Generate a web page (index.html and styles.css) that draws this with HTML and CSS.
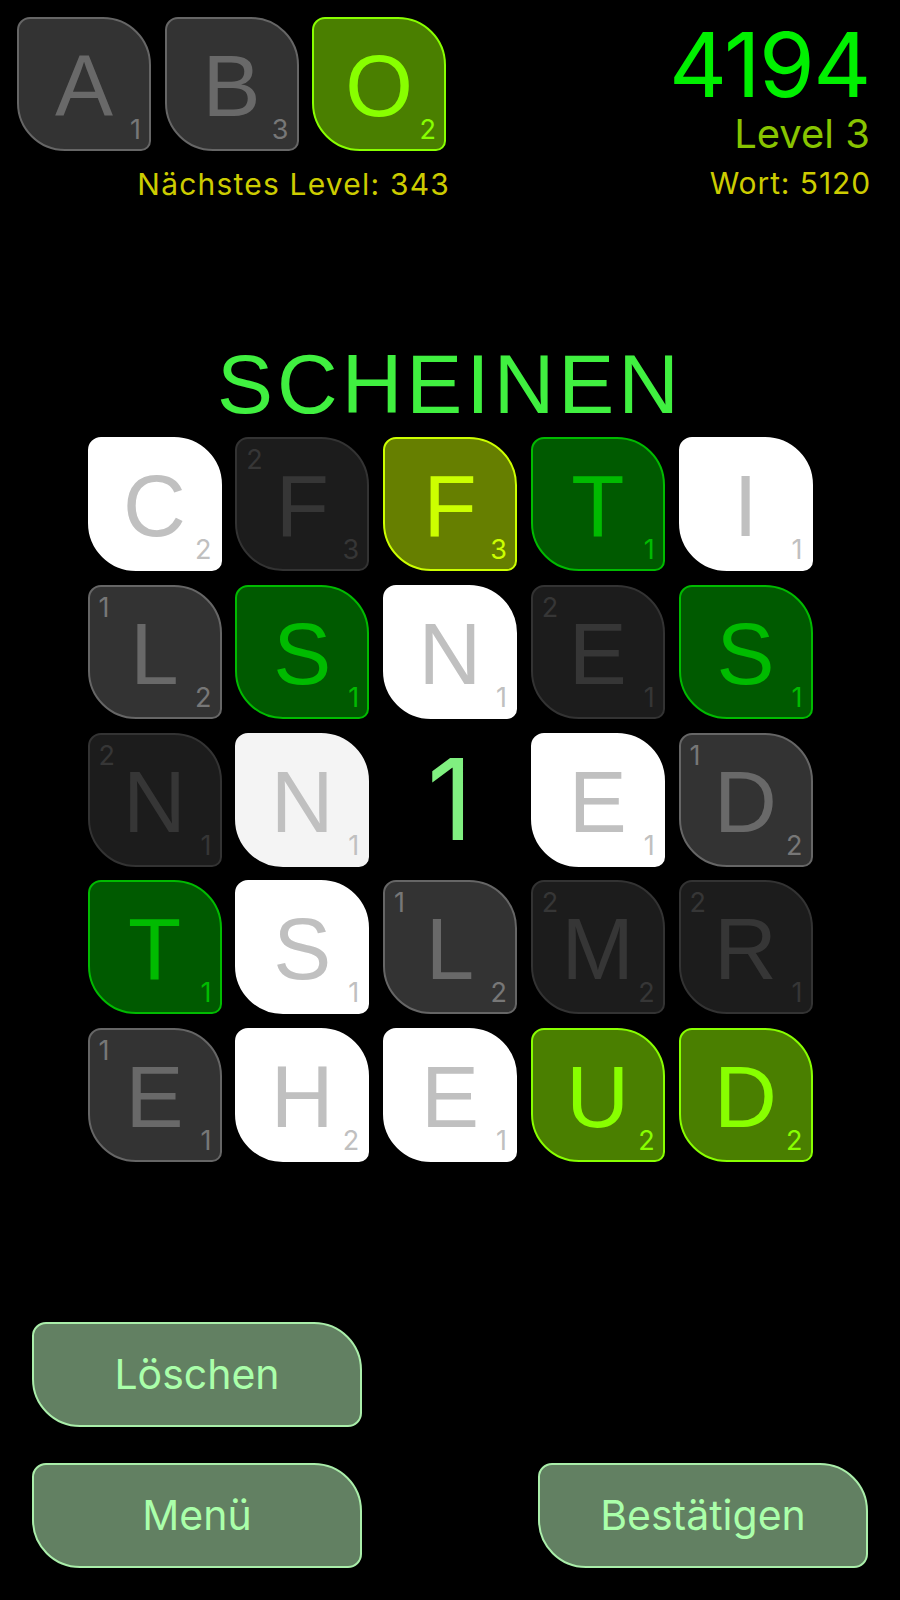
FILE: index.html
```html
<!DOCTYPE html>
<html lang="de">
<head>
<meta charset="utf-8">
<title>Wortspiel</title>
<link rel="stylesheet" href="styles.css">
</head>
<body>
<div class="screen">
  <header class="top">
    <div class="picked">
      <div class="picked-tiles">
        <div class="tile t-gray"><span class="ch">A</span><span class="pts">1</span></div>
        <div class="tile t-gray"><span class="ch">B</span><span class="pts">3</span></div>
        <div class="tile t-lime"><span class="ch">O</span><span class="pts">2</span></div>
      </div>
      <div class="next">Nächstes Level: 343</div>
    </div>
    <div class="score">
      <div class="total">4194</div>
      <div class="level">Level 3</div>
      <div class="word">Wort: 5120</div>
    </div>
  </header>

  <h1 class="current">SCHEINEN</h1>

  <div class="board">
    <div class="tile t-white"><span class="ch">C</span><span class="pts">2</span></div>
    <div class="tile t-dark"><span class="mul">2</span><span class="ch">F</span><span class="pts">3</span></div>
    <div class="tile t-olive"><span class="ch">F</span><span class="pts">3</span></div>
    <div class="tile t-green"><span class="ch">T</span><span class="pts">1</span></div>
    <div class="tile t-white"><span class="ch">I</span><span class="pts">1</span></div>

    <div class="tile t-gray"><span class="mul">1</span><span class="ch">L</span><span class="pts">2</span></div>
    <div class="tile t-green"><span class="ch">S</span><span class="pts">1</span></div>
    <div class="tile t-white"><span class="ch">N</span><span class="pts">1</span></div>
    <div class="tile t-dark"><span class="mul">2</span><span class="ch">E</span><span class="pts">1</span></div>
    <div class="tile t-green"><span class="ch">S</span><span class="pts">1</span></div>

    <div class="tile t-dark"><span class="mul">2</span><span class="ch">N</span><span class="pts">1</span></div>
    <div class="tile t-soft"><span class="ch">N</span><span class="pts">1</span></div>
    <div class="gap-cell">1</div>
    <div class="tile t-white"><span class="ch">E</span><span class="pts">1</span></div>
    <div class="tile t-gray"><span class="mul">1</span><span class="ch">D</span><span class="pts">2</span></div>

    <div class="tile t-green"><span class="ch">T</span><span class="pts">1</span></div>
    <div class="tile t-white"><span class="ch">S</span><span class="pts">1</span></div>
    <div class="tile t-gray"><span class="mul">1</span><span class="ch">L</span><span class="pts">2</span></div>
    <div class="tile t-dark"><span class="mul">2</span><span class="ch">M</span><span class="pts">2</span></div>
    <div class="tile t-dark"><span class="mul">2</span><span class="ch">R</span><span class="pts">1</span></div>

    <div class="tile t-gray"><span class="mul">1</span><span class="ch">E</span><span class="pts">1</span></div>
    <div class="tile t-white"><span class="ch">H</span><span class="pts">2</span></div>
    <div class="tile t-white"><span class="ch">E</span><span class="pts">1</span></div>
    <div class="tile t-lime"><span class="ch">U</span><span class="pts">2</span></div>
    <div class="tile t-lime"><span class="ch">D</span><span class="pts">2</span></div>
  </div>

  <footer class="actions">
    <button class="btn btn-clear">Löschen</button>
    <button class="btn btn-menu">Menü</button>
    <button class="btn btn-ok">Bestätigen</button>
  </footer>
</div>
</body>
</html>
```

FILE: styles.css
```css
html, body {
  margin: 0;
  padding: 0;
  background: #000;
}

.screen {
  width: 900px;
  min-height: 1600px;
  background: #000;
  font-family: Inter, "Noto Sans", sans-serif;
}

/* ---------- header ---------- */
.top {
  display: flex;
  justify-content: space-between;
  align-items: flex-start;
  padding: 17px 30px 0 17px;
}

.picked {
  display: flex;
  flex-direction: column;
  align-items: flex-end;
}

.picked-tiles {
  display: flex;
  gap: 13.5px;
}

.next {
  margin-top: 18px;
  margin-right: -4px;
  font-size: 30px;
  line-height: 1;
  letter-spacing: 1.2px;
  color: #cccc00;
}

.score {
  display: flex;
  flex-direction: column;
  align-items: flex-end;
}

.total {
  margin-top: 3px;
  font-size: 90px;
  line-height: 1;
  letter-spacing: -1.5px;
  color: #00f000;
}

.level {
  margin-top: 4px;
  font-size: 40px;
  line-height: 1;
  color: #88c400;
}

.word {
  margin-top: 14px;
  margin-right: -1px;
  font-size: 30px;
  line-height: 1;
  letter-spacing: 0.9px;
  color: #cccc00;
}

/* ---------- current word ---------- */
.current {
  margin: 143px 0 11px;
  text-align: center;
  font-family: "Liberation Sans", Arial, sans-serif;
  font-weight: 400;
  font-size: 84px;
  line-height: 1;
  letter-spacing: 4px;
  color: #40f040;
}

/* ---------- board ---------- */
.board {
  display: grid;
  grid-template-columns: repeat(5, 134px);
  grid-auto-rows: 134px;
  gap: 13.75px;
  justify-content: center;
}

.tile {
  position: relative;
  box-sizing: border-box;
  width: 134px;
  height: 134px;
  border: 2px solid;
  border-radius: 13px 48px 10px 48px;
  display: flex;
  align-items: center;
  justify-content: center;
}

.ch {
  font-family: "Liberation Sans", Arial, sans-serif;
  font-size: 87px;
  line-height: 1;
  padding-top: 3px;
}

.pts, .mul {
  position: absolute;
  font-family: Inter, "Noto Sans", sans-serif;
  font-size: 27px;
  line-height: 1;
}

.pts {
  right: 8px;
  bottom: 6px;
}

.mul {
  left: 9px;
  top: 7px;
}

.t-white { background: #fff; border-color: #fff; color: #c0c0c0; }
.t-soft  { background: #f4f4f4; border-color: #f4f4f4; color: #c0c0c0; }
.t-gray  { background: #333; border-color: #666; color: #696969; }
.t-gray .pts, .t-gray .mul { color: #777; }
.t-dark  { background: #1c1c1c; border-color: #333; color: #363636; }
.t-olive { background: #667f00; border-color: #ccff00; color: #ccff00; }
.t-green { background: #005a00; border-color: #00bb00; color: #00bb00; }
.t-lime  { background: #4a7f00; border-color: #88ff00; color: #88ff00; }

.gap-cell {
  display: flex;
  align-items: center;
  justify-content: center;
  font-family: Inter, "Noto Sans", sans-serif;
  font-size: 113px;
  line-height: 1;
  color: #80f080;
}

/* ---------- actions ---------- */
.actions {
  display: grid;
  grid-template-columns: 330px 330px;
  grid-template-rows: 105px 105px;
  justify-content: space-between;
  row-gap: 36px;
  padding: 0 32px;
  margin-top: 160px;
}

.btn {
  box-sizing: border-box;
  margin: 0;
  border: 2px solid #aaeeaa;
  border-radius: 14px 48px 14px 48px;
  background: #628062;
  color: #aaffaa;
  font-family: Inter, "Noto Sans", sans-serif;
  font-size: 41px;
  line-height: 1;
  display: flex;
  align-items: center;
  justify-content: center;
}

.btn-clear { grid-column: 1; grid-row: 1; }
.btn-menu  { grid-column: 1; grid-row: 2; }
.btn-ok    { grid-column: 2; grid-row: 2; }
```
